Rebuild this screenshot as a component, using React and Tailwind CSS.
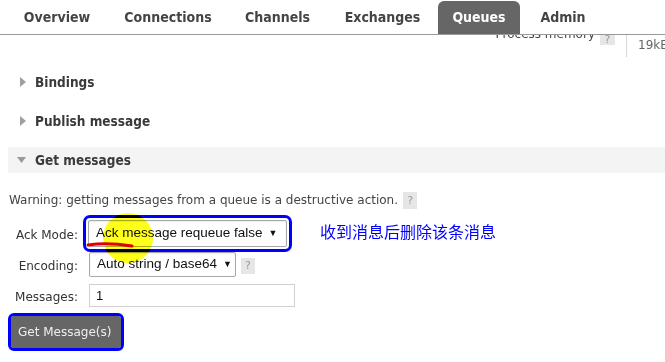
import React from "react";

const tabs = [
  { name: "Overview", w: "w-[102px]" },
  { name: "Connections", w: "w-[120px]" },
  { name: "Channels", w: "w-[99px]" },
  { name: "Exchanges", w: "w-[111px]" },
  { name: "Queues", w: "w-[82px]", active: true },
  { name: "Admin", w: "w-[86px]" },
];

const condensed = { fontFamily: '"DejaVu Sans Condensed", "Liberation Sans", sans-serif' };
const verdana = { fontFamily: '"DejaVu Sans", Verdana, sans-serif' };
const arial = { fontFamily: '"Liberation Sans", Arial, sans-serif' };

function Caret({ open }) {
  return open ? (
    <svg width="9" height="7" viewBox="0 0 9 7" className="shrink-0">
      <path d="M0 0 L9 0 L4.5 6 Z" fill="#9a9a9a" />
    </svg>
  ) : (
    <svg width="7" height="10" viewBox="0 0 7 10" className="shrink-0">
      <path d="M0 0 L6 5 L0 10 Z" fill="#a0a0a0" />
    </svg>
  );
}

function HelpBox({ className = "" }) {
  return (
    <span
      className={`flex items-center justify-center bg-[#e6e6e6] text-[#9a9a9a] text-[11px] leading-none ${className}`}
      style={verdana}
    >
      ?
    </span>
  );
}

function Section({ title, open }) {
  return (
    <div className={`h-[26px] flex items-center ${open ? "ml-[8px] bg-[#f4f4f4] pl-[9px]" : "pl-[20px]"}`}>
      <Caret open={open} />
      <span
        className={`text-[13.5px] font-bold text-[#3a3a3a] ${open ? "ml-[9px]" : "ml-[8px]"}`}
        style={condensed}
      >
        {title}
      </span>
    </div>
  );
}

function FakeSelect({ label, className }) {
  return (
    <div
      className={`flex items-center justify-between gap-[6px] bg-white border border-[#a8a8a8] rounded-[2px] shadow-[inset_0_1px_2px_rgba(0,0,0,0.08)] pl-[7px] text-[13.5px] text-[#111] ${className}`}
      style={arial}
    >
      <span className="whitespace-nowrap">{label}</span>
      <span className="text-[9px] leading-none">▼</span>
    </div>
  );
}

export default function App() {
  return (
    <div className="relative w-[665px] h-[362px] overflow-hidden bg-white">
      {/* nav */}
      <div className="h-[35px] border-b border-[#9a9a9a] flex items-end pl-[6px]">
        {tabs.map((t) => (
          <div
            key={t.name}
            className={`${t.w} h-[33px] flex items-center justify-center text-[14px] font-bold ${
              t.active ? "bg-[#666] text-white rounded-t-[6px]" : "text-[#444]"
            }`}
            style={condensed}
          >
            {t.name}
          </div>
        ))}
      </div>

      {/* clipped stats row */}
      <div className="h-[25px] overflow-hidden">
        <div className="flex justify-end items-start -mt-[8px]">
          <span className="text-[12px] text-[#444] leading-[14px] whitespace-nowrap" style={verdana}>
            Process memory
          </span>
          <HelpBox className="w-[15px] h-[12px] mt-[6px] ml-[5px]" />
          <div className="ml-[11px] w-[39px] h-[30px] border-l border-[#d8d8d8] pl-[11px] pt-[4px] overflow-hidden">
            <span className="text-[12px] text-[#666] leading-[14px] whitespace-nowrap" style={verdana}>
              19kB
            </span>
          </div>
        </div>
      </div>

      {/* sections */}
      <div className="mt-[9px] flex flex-col gap-[13px]">
        <Section title="Bindings" />
        <Section title="Publish message" />
        <Section title="Get messages" open />
      </div>

      {/* warning */}
      <div className="mt-[17px] h-[20px] pl-[9px] flex items-center text-[12px] text-[#444]" style={verdana}>
        <span className="whitespace-nowrap">Warning: getting messages from a queue is a destructive action.</span>
        <HelpBox className="w-[14px] h-[17px] ml-[5px]" />
      </div>

      {/* form */}
      <div className="mt-[10px] flex flex-col text-[12px] text-[#333]" style={verdana}>
        <div className="flex items-center h-[27px]">
          <label className="w-[78px] text-right pt-[3px]">Ack Mode:</label>
          <FakeSelect
            label="Ack message requeue false"
            className="ml-[10px] w-[199px] h-[27px] pr-[10px] outline outline-[3px] outline-[#0000ff] outline-offset-[2px]"
          />
        </div>
        <div className="flex items-center h-[25px] mt-[5px]">
          <label className="w-[78px] text-right pt-[3px]">Encoding:</label>
          <FakeSelect label="Auto string / base64" className="ml-[11px] w-[147px] h-[25px] pr-[6px]" />
          <HelpBox className="w-[14px] h-[16px] ml-[5px] mt-[2px]" />
        </div>
        <div className="flex items-center h-[23px] mt-[7px]">
          <label className="w-[78px] text-right pt-[3px]">Messages:</label>
          <div
            className="ml-[11px] w-[206px] h-[23px] border border-[#d0d0d0] pl-[6px] flex items-center text-[13px] text-[#111]"
            style={arial}
          >
            1
          </div>
        </div>
        <button
          className="mt-[9px] ml-[11px] w-[110px] h-[32px] rounded-[3px] bg-[#666] text-[#eee] text-[12px] outline outline-[3px] outline-[#0000ff] text-left pl-[7px]"
          style={verdana}
        >
          Get Message(s)
        </button>
      </div>

      {/* screen-recording annotations */}
      <div className="absolute left-[103px] top-[213px] w-[50px] h-[50px] rounded-full bg-[#ffff00] opacity-90 mix-blend-multiply pointer-events-none" />
      <svg className="absolute left-[86px] top-[238px] pointer-events-none" width="50" height="12" viewBox="0 0 50 12">
        <path d="M2 7 C 14 5, 28 5, 46 8" stroke="#e00000" strokeWidth="3" fill="none" strokeLinecap="round" />
      </svg>
      <div
        className="absolute left-[320px] top-[219px] text-[16px] text-[#0000ff] whitespace-nowrap"
        style={{ fontFamily: '"Noto Sans CJK SC", sans-serif' }}
      >
        收到消息后删除该条消息
      </div>
    </div>
  );
}
